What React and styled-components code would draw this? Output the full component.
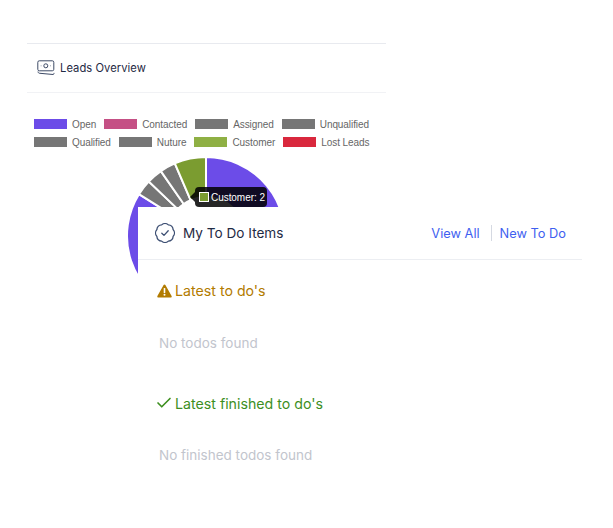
import React from 'react';
import styled, { createGlobalStyle } from 'styled-components';
import { Check } from 'lucide-react';

const GlobalStyle = createGlobalStyle`
  html, body {
    margin: 0;
    padding: 0;
    background: #fff;
    font-family: Inter, "Liberation Sans", sans-serif;
  }
`;

const legend = [
  { label: 'Open', color: '#6c4ce8' },
  { label: 'Contacted', color: '#c55085' },
  { label: 'Assigned', color: '#767676' },
  { label: 'Unqualified', color: '#767676' },
  { label: 'Qualified', color: '#767676' },
  { label: 'Nuture', color: '#767676' },
  { label: 'Customer', color: '#8fb044' },
  { label: 'Lost Leads', color: '#d9283d' },
];

const CX = 79;
const CY = 79;
const R = 79;
const HOLE = 39;

function wedge(fromDeg, toDeg) {
  const point = (deg, r) => {
    const a = (deg * Math.PI) / 180;
    return `${CX + r * Math.sin(a)} ${CY - r * Math.cos(a)}`;
  };
  const large = toDeg - fromDeg > 180 ? 1 : 0;
  return `M${point(fromDeg, HOLE)} L${point(fromDeg, R)} A${R} ${R} 0 ${large} 1 ${point(toDeg, R)} L${point(toDeg, HOLE)} A${HOLE} ${HOLE} 0 ${large} 0 ${point(fromDeg, HOLE)} Z`;
}

const unit = 360 / 31;
const slices = [
  { value: 26, color: '#6c4ce8' },
  { value: 1, color: '#767676' },
  { value: 1, color: '#767676' },
  { value: 1, color: '#767676' },
  { value: 2, color: '#7b9c30' },
];

function DoughnutChart() {
  let start = 0;
  return (
    <svg width="158" height="158" viewBox="0 0 158 158">
      {slices.map((slice, i) => {
        const from = start;
        start += slice.value * unit;
        return (
          <path
            key={i}
            d={wedge(from, start)}
            fill={slice.color}
            stroke="#fff"
            strokeWidth="2"
          />
        );
      })}
    </svg>
  );
}

function MoneyIcon() {
  return (
    <svg width="18" height="16" viewBox="0 0 18 16" fill="none" stroke="#3d4a66" strokeWidth="1">
      <rect x="0.8" y="0.8" width="16" height="10" rx="1.5" />
      <circle cx="8.8" cy="5.8" r="2" />
      <path d="M3.8 5.8h.5M13.3 5.8h.5" />
      <path d="M1 11.5c0 1.2.8 1.8 2 1.8l13.2 1.2c.5 0 .8-.6.8-1.6" />
    </svg>
  );
}

function BadgeIcon() {
  return (
    <svg width="20" height="20" viewBox="0 0 20 20" fill="none" stroke="#3d4f73" strokeWidth="1.3" strokeLinejoin="round">
      <path d="M13.37 1.87A5 5 0 0 1 18.13 6.63A5 5 0 0 1 18.13 13.37A5 5 0 0 1 13.37 18.13A5 5 0 0 1 6.63 18.13A5 5 0 0 1 1.87 13.37A5 5 0 0 1 1.87 6.63A5 5 0 0 1 6.63 1.87A5 5 0 0 1 13.37 1.87Z" />
      <path d="M6.8 10.2l2.2 2.2 4.2-4.6" strokeLinecap="round" />
    </svg>
  );
}

function WarnIcon() {
  return (
    <svg width="15" height="14" viewBox="0 0 15 14">
      <path d="M7.5.5c.4 0 .7.2.9.5l6.2 10.9c.4.7-.1 1.6-.9 1.6H1.3c-.8 0-1.3-.9-.9-1.6L6.6 1c.2-.3.5-.5.9-.5z" fill="#b27b00" />
      <rect x="6.7" y="4" width="1.6" height="5" rx=".6" fill="#fff" />
      <circle cx="7.5" cy="10.8" r="1" fill="#fff" />
    </svg>
  );
}

export default function App() {
  return (
    <>
      <GlobalStyle />
      <Page>
        <LeadsCard>
          <LeadsHeader>
            <MoneyIcon />
            <LeadsTitle>Leads Overview</LeadsTitle>
          </LeadsHeader>
          <Legend>
            {legend.map((item) => (
              <LegendItem key={item.label}>
                <Swatch $color={item.color} />
                {item.label}
              </LegendItem>
            ))}
          </Legend>
          <ChartWrap>
            <DoughnutChart />
            <Tooltip>
              <TooltipSwatch />
              Customer: 2
            </Tooltip>
          </ChartWrap>
        </LeadsCard>
        <TodoCard>
          <TodoHeader>
            <BadgeIcon />
            <TodoTitle>My To Do Items</TodoTitle>
            <TodoLinks>
              <TodoLink>View All</TodoLink>
              <LinkDivider />
              <TodoLink>New To Do</TodoLink>
            </TodoLinks>
          </TodoHeader>
          <Section>
            <SectionTitle $color="#b27b00">
              <WarnIcon />
              Latest to do's
            </SectionTitle>
            <Empty>No todos found</Empty>
          </Section>
          <Section $finished>
            <SectionTitle $color="#3d8f1f" $tight>
              <Check size={18} strokeWidth={2.2} color="#3d8f1f" />
              Latest finished to do's
            </SectionTitle>
            <Empty $finished>No finished todos found</Empty>
          </Section>
        </TodoCard>
      </Page>
    </>
  );
}

const Page = styled.div`
  position: relative;
  width: 613px;
  height: 528px;
  overflow: hidden;
  background: #fff;
  padding: 43px 0 0 27px;
  box-sizing: border-box;
`;

const LeadsCard = styled.section`
  width: 359px;
`;

const LeadsHeader = styled.div`
  display: flex;
  align-items: center;
  gap: 5px;
  height: 47px;
  padding: 0 0 1px 10px;
  border-top: 1px solid #e8eaef;
  border-bottom: 1px solid #f1f2f5;
`;

const LeadsTitle = styled.h2`
  margin: 0;
  font-size: 11.2px;
  font-weight: 400;
  letter-spacing: 0.05px;
  color: #1f2a44;
`;

const Legend = styled.div`
  display: flex;
  flex-wrap: wrap;
  column-gap: 8px;
  row-gap: 6px;
  padding: 25px 0 0 7px;
  width: 345px;
  height: 43px;
  align-content: flex-start;
`;

const LegendItem = styled.div`
  display: flex;
  align-items: center;
  gap: 5px;
  height: 12px;
  font-family: "Liberation Sans", Arial, sans-serif;
  font-size: 10px;
  letter-spacing: -0.07px;
  color: #666;
  white-space: nowrap;
`;

const Swatch = styled.span`
  width: 33px;
  height: 10px;
  background: ${(p) => p.$color};
`;

const ChartWrap = styled.div`
  position: relative;
  width: 158px;
  margin: -4px 0 0 100px;
`;

const Tooltip = styled.div`
  position: absolute;
  left: 68px;
  top: 30px;
  display: flex;
  align-items: center;
  gap: 2px;
  height: 20px;
  padding: 0 2px 0 4px;
  border-radius: 4px;
  background: rgba(0, 0, 0, 0.85);
  color: #fff;
  font-family: "Liberation Sans", Arial, sans-serif;
  font-size: 10px;
  letter-spacing: -0.05px;
  white-space: nowrap;

  &::before {
    content: '';
    position: absolute;
    left: -5px;
    top: 5px;
    border: 5px solid transparent;
    border-left: 0;
    border-right-color: rgba(0, 0, 0, 0.85);
  }
`;

const TooltipSwatch = styled.span`
  width: 10px;
  height: 10px;
  box-sizing: border-box;
  background: #7b9c30;
  border: 1px solid #fff;
`;

const TodoCard = styled.section`
  position: absolute;
  left: 138px;
  top: 207px;
  width: 444px;
  height: 280px;
  background: #fff;
`;

const TodoHeader = styled.div`
  display: flex;
  align-items: center;
  height: 52px;
  padding: 0 16px 0 17px;
  border-bottom: 1px solid #eceef2;
`;

const TodoTitle = styled.h2`
  margin: 0 0 0 8px;
  font-size: 13.6px;
  font-weight: 400;
  color: #1f2a44;
`;

const TodoLinks = styled.div`
  display: flex;
  align-items: center;
  margin-left: auto;
`;

const TodoLink = styled.a`
  font-size: 12.8px;
  color: #3f5ff0;
`;

const LinkDivider = styled.span`
  width: 1px;
  height: 16px;
  margin: 0 8px 0 11px;
  background: #d5d9e2;
`;

const Section = styled.div`
  padding: ${(p) => (p.$finished ? '43px' : '22px')} 0 0 19px;
`;

const SectionTitle = styled.h3`
  display: flex;
  align-items: center;
  gap: ${(p) => (p.$tight ? '2px' : '3px')};
  margin: 0 0 0 ${(p) => (p.$tight ? '-2px' : '0')};
  font-size: 14.2px;
  font-weight: 400;
  color: ${(p) => p.$color};
`;

const Empty = styled.p`
  margin: ${(p) => (p.$finished ? '35px' : '36px')} 0 0 2px;
  font-size: 13.5px;
  color: #c2c5cd;
`;
